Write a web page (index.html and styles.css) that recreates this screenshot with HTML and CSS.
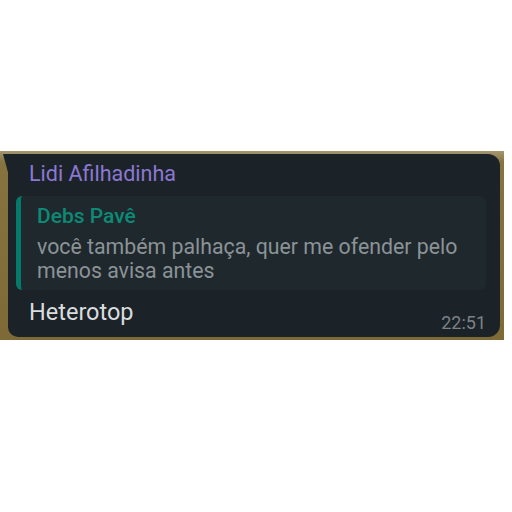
FILE: index.html
```html
<!DOCTYPE html>
<html>
<head>
<meta charset="utf-8">
<link rel="stylesheet" href="styles.css">
</head>
<body>
<div class="frame">
  <div class="bubble">
    <div class="tail"></div>
    <div class="sender">Lidi Afilhadinha</div>
    <div class="quote">
      <div class="quote-name">Debs Pavê</div>
      <div class="quote-text">você também palhaça, quer me ofender pelo menos avisa antes</div>
    </div>
    <div class="body">
      <span class="msg">Heterotop</span>
      <span class="time">22:51</span>
    </div>
  </div>
</div>
</body>
</html>
```
FILE: styles.css
```css
html, body {
  margin: 0;
  padding: 0;
  background: #ffffff;
  width: 512px;
  height: 512px;
  overflow: hidden;
  font-family: Roboto, "Noto Sans", sans-serif;
}
.frame {
  margin-top: 151px;
  width: 504px;
  height: 189px;
  background: linear-gradient(180deg, #a39770 0%, #86733f 6%, #7e6a37 100%);
  padding: 3px 4px 3px 8px;
  box-sizing: border-box;
}
.bubble {
  position: relative;
  background: #1b2328;
  border-radius: 0 12px 12px 10px;
  height: 100%;
  box-sizing: border-box;
  padding: 7px 14px 0 8px;
}
.tail {
  position: absolute;
  left: -5px;
  top: 0;
  width: 6px;
  height: 22px;
  background: #1b2328;
  clip-path: polygon(0 0, 100% 0, 100% 100%);
}
.sender {
  color: #8c78d4;
  font-size: 21.5px;
  line-height: 26px;
  padding-left: 13px;
}
.quote {
  margin-top: 9px;
  background: #1f282d;
  border-left: 5px solid #067a6a;
  border-radius: 6px;
  padding: 8px 10px 7px 16px;
}
.quote-name {
  color: #0c8a75;
  font-size: 21px;
  font-weight: 500;
  line-height: 24px;
}
.quote-text {
  color: #8b9397;
  font-size: 21.3px;
  line-height: 24px;
  margin-top: 7px;
}
.body {
  display: flex;
  justify-content: space-between;
  align-items: flex-end;
  padding-left: 13px;
  margin-top: 8px;
}
.msg {
  color: #dadddf;
  font-size: 23.5px;
  line-height: 28px;
}
.time {
  color: #7b8286;
  font-size: 18px;
  line-height: 18px;
  margin-bottom: -6px;
  margin-right: 0;
}
```
